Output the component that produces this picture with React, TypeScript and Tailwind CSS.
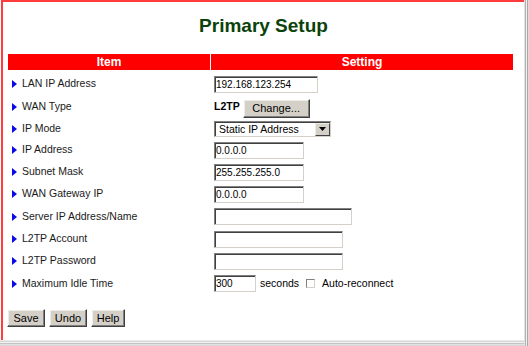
import type { ReactNode } from "react"

const Arrow = () => (
  <svg width="5" height="8" viewBox="0 0 5 8" className="shrink-0">
    <polygon points="0,0 5,4 0,8" fill="#0a0ae6" />
  </svg>
)

const Field = ({ value = "", width }: { value?: string; width: string }) => (
  <input
    readOnly
    value={value}
    className={`${width} h-[17px] box-border border border-t-[#808080] border-l-[#808080] border-r-[#d4d0c8] border-b-[#d4d0c8] shadow-[inset_1px_1px_0_#404040] bg-white pl-[1px] text-[10px] text-black outline-none`}
  />
)

const Btn = ({ children, width, height }: { children: ReactNode; width: string; height: string }) => (
  <button
    className={`${width} ${height} box-border bg-[#d4d0c8] border border-t-white border-l-white border-r-[#404040] border-b-[#404040] shadow-[inset_-1px_-1px_0_#808080,inset_1px_1px_0_#eeece6] text-[11px] leading-none text-black`}
  >
    {children}
  </button>
)

const Select = () => (
  <div className="w-[117px] h-[16px] box-border flex border border-t-[#808080] border-l-[#808080] border-r-[#d4d0c8] border-b-[#d4d0c8] shadow-[inset_1px_1px_0_#404040] bg-white">
    <span className="flex-1 pl-[4px] pt-[1px] text-[10.5px] leading-[13px] text-black">Static IP Address</span>
    <span className="w-[15px] mt-[1px] box-border flex items-center justify-center bg-[#d4d0c8] border border-t-[#eeece6] border-l-[#eeece6] border-r-[#404040] border-b-[#404040]">
      <svg width="7" height="4" viewBox="0 0 7 4">
        <polygon points="0,0 7,0 3.5,4" fill="#000" />
      </svg>
    </span>
  </div>
)

const rows: { label: string; h: string; body: ReactNode }[] = [
  { label: "LAN IP Address", h: "h-[22px]", body: <Field value="192.168.123.254" width="w-[104px]" /> },
  {
    label: "WAN Type",
    h: "h-[23px]",
    body: (
      <div className="flex items-center">
        <span className="text-[10.5px] font-bold text-black">L2TP</span>
        <span className="ml-[3px]">
          <Btn width="w-[67px]" height="h-[19px]">Change...</Btn>
        </span>
      </div>
    ),
  },
  { label: "IP Mode", h: "h-[21px]", body: <Select /> },
  { label: "IP Address", h: "h-[22px]", body: <Field value="0.0.0.0" width="w-[90px]" /> },
  { label: "Subnet Mask", h: "h-[22px]", body: <Field value="255.255.255.0" width="w-[90px]" /> },
  { label: "WAN Gateway IP", h: "h-[22px]", body: <Field value="0.0.0.0" width="w-[90px]" /> },
  { label: "Server IP Address/Name", h: "h-[23px]", body: <Field width="w-[138px]" /> },
  { label: "L2TP Account", h: "h-[22px]", body: <Field width="w-[129px]" /> },
  { label: "L2TP Password", h: "h-[22px]", body: <Field width="w-[129px]" /> },
  {
    label: "Maximum Idle Time",
    h: "h-[23px]",
    body: (
      <div className="flex items-center text-[10.5px] text-black">
        <Field value="300" width="w-[42px]" />
        <span className="ml-[4px]">seconds</span>
        <span className="ml-[7px] w-[9px] h-[9px] box-border border border-t-[#808080] border-l-[#808080] border-r-[#d4d0c8] border-b-[#d4d0c8] bg-white" />
        <span className="ml-[7px]">Auto-reconnect</span>
      </div>
    ),
  },
]

export default function App() {
  return (
    <div className="w-[529px] h-[346px] flex bg-white overflow-hidden font-['Liberation_Sans',Arial,sans-serif]">
      <div className="flex-1 flex flex-col">
        <div className="flex-1 ml-[1px] border-t-2 border-l-2 border-[#ff3b3b] flex flex-col">
          <h1 className="mt-[14px] h-[19px] leading-[19px] text-center text-[19px] font-bold text-[#0b420b]">
            Primary Setup
          </h1>

          <div className="mt-[19px] ml-[5px] w-[505px] flex flex-col">
            <div className="flex gap-[1px] h-[16px] text-[12px] font-bold text-white">
              <div className="w-[202px] bg-[#ff0000] flex items-center justify-center">Item</div>
              <div className="flex-1 bg-[#ff0000] flex items-center justify-center">Setting</div>
            </div>
            <div className="mt-[3px] flex flex-col">
              {rows.map((r) => (
                <div key={r.label} className={`flex ${r.h}`}>
                  <div className="w-[202px] flex items-center gap-[5px] pl-[4px] text-[10.5px] text-[#1a1a1a]">
                    <Arrow />
                    <span>{r.label}</span>
                  </div>
                  <div className="flex-1 ml-[1px] pl-[3px] flex items-center">{r.body}</div>
                </div>
              ))}
            </div>
          </div>

          <div className="mt-[14px] ml-[4px] flex gap-[4px]">
            <Btn width="w-[38px]" height="h-[18px]">Save</Btn>
            <Btn width="w-[38px]" height="h-[18px]">Undo</Btn>
            <Btn width="w-[34px]" height="h-[18px]">Help</Btn>
          </div>
        </div>

        <div className="h-[6px] flex flex-col">
          <div className="h-[1px] bg-[#ebebeb]" />
          <div className="h-[1px] bg-[#d6d6d6]" />
          <div className="h-[1px] bg-[#f2f2f2]" />
          <div className="h-[1px] bg-[#c4c4c4]" />
          <div className="h-[1px] bg-[#e2e2e2]" />
          <div className="h-[1px] bg-[#d8d8d8]" />
        </div>
      </div>

      <div className="w-[5px] flex">
        <div className="w-[1px] bg-[#e0e0e0]" />
        <div className="w-[1px] bg-[#b4b4b4]" />
        <div className="w-[1px] bg-[#f0f0f0]" />
        <div className="w-[1px] bg-[#a8a8a8]" />
        <div className="w-[1px] bg-[#dcdcdc]" />
      </div>
    </div>
  )
}
